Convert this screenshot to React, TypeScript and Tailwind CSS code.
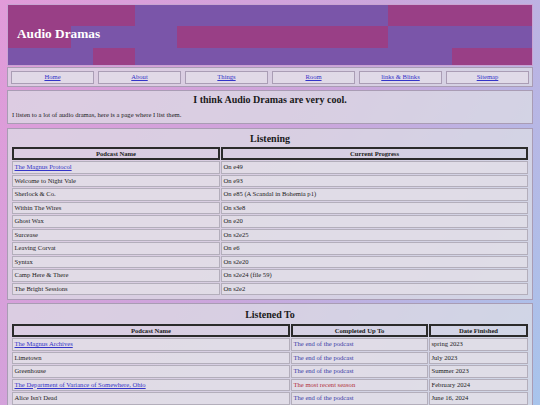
const serif = { fontFamily: '"Liberation Serif", "Times New Roman", serif' };

const navLinks = ['Home', 'About', 'Things', 'Room', 'links & Blinks', 'Sitemap'];

const listening: { name: string; link?: boolean; progress: string }[] = [
  { name: 'The Magnus Protocol', link: true, progress: 'On e49' },
  { name: 'Welcome to Night Vale', progress: 'On e93' },
  { name: 'Sherlock & Co.', progress: 'On e85 (A Scandal in Bohemia p1)' },
  { name: 'Within The Wires', progress: 'On s3e8' },
  { name: 'Ghost Wax', progress: 'On e20' },
  { name: 'Surcease', progress: 'On s2e25' },
  { name: 'Leaving Corvat', progress: 'On e6' },
  { name: 'Syntax', progress: 'On s2e20' },
  { name: 'Camp Here & There', progress: 'On s2e24 (file 59)' },
  { name: 'The Bright Sessions', progress: 'On s2e2' },
];

const listenedTo: { name: string; link?: boolean; done: string; recent?: boolean; date: string }[] = [
  { name: 'The Magnus Archives', link: true, done: 'The end of the podcast', date: 'spring 2023' },
  { name: 'Limetown', done: 'The end of the podcast', date: 'July 2023' },
  { name: 'Greenhouse', done: 'The end of the podcast', date: 'Summer 2023' },
  { name: 'The Department of Variance of Somewhere, Ohio', link: true, done: 'The most recent season', recent: true, date: 'February 2024' },
  { name: "Alice Isn't Dead", done: 'The end of the podcast', date: 'June 16, 2024' },
];

// header banner blocks: [width, colour]
const M = 'bg-[#993f86]';
const P = 'bg-[#7a55a9]';
const bannerRows: { h: string; cells: [string, string][] }[] = [
  { h: 'h-[21px]', cells: [['w-[127px]', M], ['w-[253px]', P], ['flex-1', M]] },
  { h: 'h-[22px]', cells: [['w-[63px]', M], ['w-[106px]', P], ['w-[211px]', M], ['flex-1', P]] },
  { h: 'h-[17px]', cells: [['w-[85px]', P], ['w-[42px]', M], ['w-[317px]', P], ['flex-1', M]] },
];

const box = 'border border-[#a99cb4] bg-[rgba(220,220,228,0.75)]';
const cell = 'border border-[#b3aebb] bg-[rgba(226,223,231,0.8)] px-[1.5px] h-[12.5px] leading-[10px] text-[6.6px] text-[#222]';
const headCell = 'border-2 border-[#2b2b2b] h-[13px] leading-[9px] text-[6.6px] font-bold text-[#222] text-center';
const linkCls = 'text-[#3434c8] underline';

function Banner() {
  return (
    <div className="relative border border-[#c9a3d2]">
      {bannerRows.map((row, i) => (
        <div key={i} className={`flex ${row.h}`}>
          {row.cells.map(([w, c], j) => (
            <div key={j} className={`${w} ${c}`} />
          ))}
        </div>
      ))}
      <h1 className="absolute left-[9px] top-[21px] text-[13.3px] leading-[16px] font-bold text-white">Audio Dramas</h1>
    </div>
  );
}

function Nav() {
  return (
    <div className={`${box} mt-[1px] flex gap-[4px] px-[3px] py-[2.5px]`}>
      {navLinks.map((l) => (
        <div key={l} className="flex-1 h-[13px] border border-[#aa9db5] bg-[rgba(226,220,232,0.8)] flex items-center justify-center">
          <a className={`${linkCls} text-[6.6px] leading-[8px]`}>{l}</a>
        </div>
      ))}
    </div>
  );
}

export default function App() {
  return (
    <div
      style={serif}
      className="min-h-[405px] bg-[linear-gradient(120deg,#e19bd9_0%,#cba6dc_50%,#a7c5ec_100%)] px-[7px] pt-[4px] pb-[10px]"
    >
      <Banner />
      <Nav />

      <div className={`${box} mt-[3px] h-[34px] px-[4px] pt-[2px]`}>
        <h2 className="text-center text-[10px] leading-[14px] font-bold text-[#1a1a1a]">I think Audio Dramas are very cool.</h2>
        <p className="mt-[3px] text-[6.6px] leading-[9px] text-[#222]">I listen to a lot of audio dramas, here is a page where I list them.</p>
      </div>

      <div className={`${box} mt-[4px] px-[3px] pt-[3px] pb-[3px]`}>
        <h2 className="text-center text-[10px] leading-[14px] font-bold text-[#1a1a1a]">Listening</h2>
        <table className="w-full border-separate border-spacing-[1px] table-fixed">
          <colgroup>
            <col className="w-[208px]" />
            <col />
          </colgroup>
          <thead>
            <tr>
              <th className={headCell}>Podcast Name</th>
              <th className={headCell}>Current Progress</th>
            </tr>
          </thead>
          <tbody>
            {listening.map((r) => (
              <tr key={r.name}>
                <td className={cell}>{r.link ? <a className={linkCls}>{r.name}</a> : r.name}</td>
                <td className={cell}>{r.progress}</td>
              </tr>
            ))}
          </tbody>
        </table>
      </div>

      <div className={`${box} mt-[3px] px-[3px] pt-[4px] pb-[3px]`}>
        <h2 className="text-center text-[10px] leading-[14px] font-bold text-[#1a1a1a] mb-[1px]">Listened To</h2>
        <table className="w-full border-separate border-spacing-[1px] table-fixed">
          <colgroup>
            <col className="w-[278px]" />
            <col className="w-[137px]" />
            <col />
          </colgroup>
          <thead>
            <tr>
              <th className={headCell}>Podcast Name</th>
              <th className={headCell}>Completed Up To</th>
              <th className={headCell}>Date Finished</th>
            </tr>
          </thead>
          <tbody>
            {listenedTo.map((r) => (
              <tr key={r.name}>
                <td className={cell}>{r.link ? <a className={linkCls}>{r.name}</a> : r.name}</td>
                <td className={`${cell} ${r.recent ? '!text-[#b0303a]' : '!text-[#3c3ca6]'}`}>{r.done}</td>
                <td className={cell}>{r.date}</td>
              </tr>
            ))}
          </tbody>
        </table>
      </div>
    </div>
  );
}
